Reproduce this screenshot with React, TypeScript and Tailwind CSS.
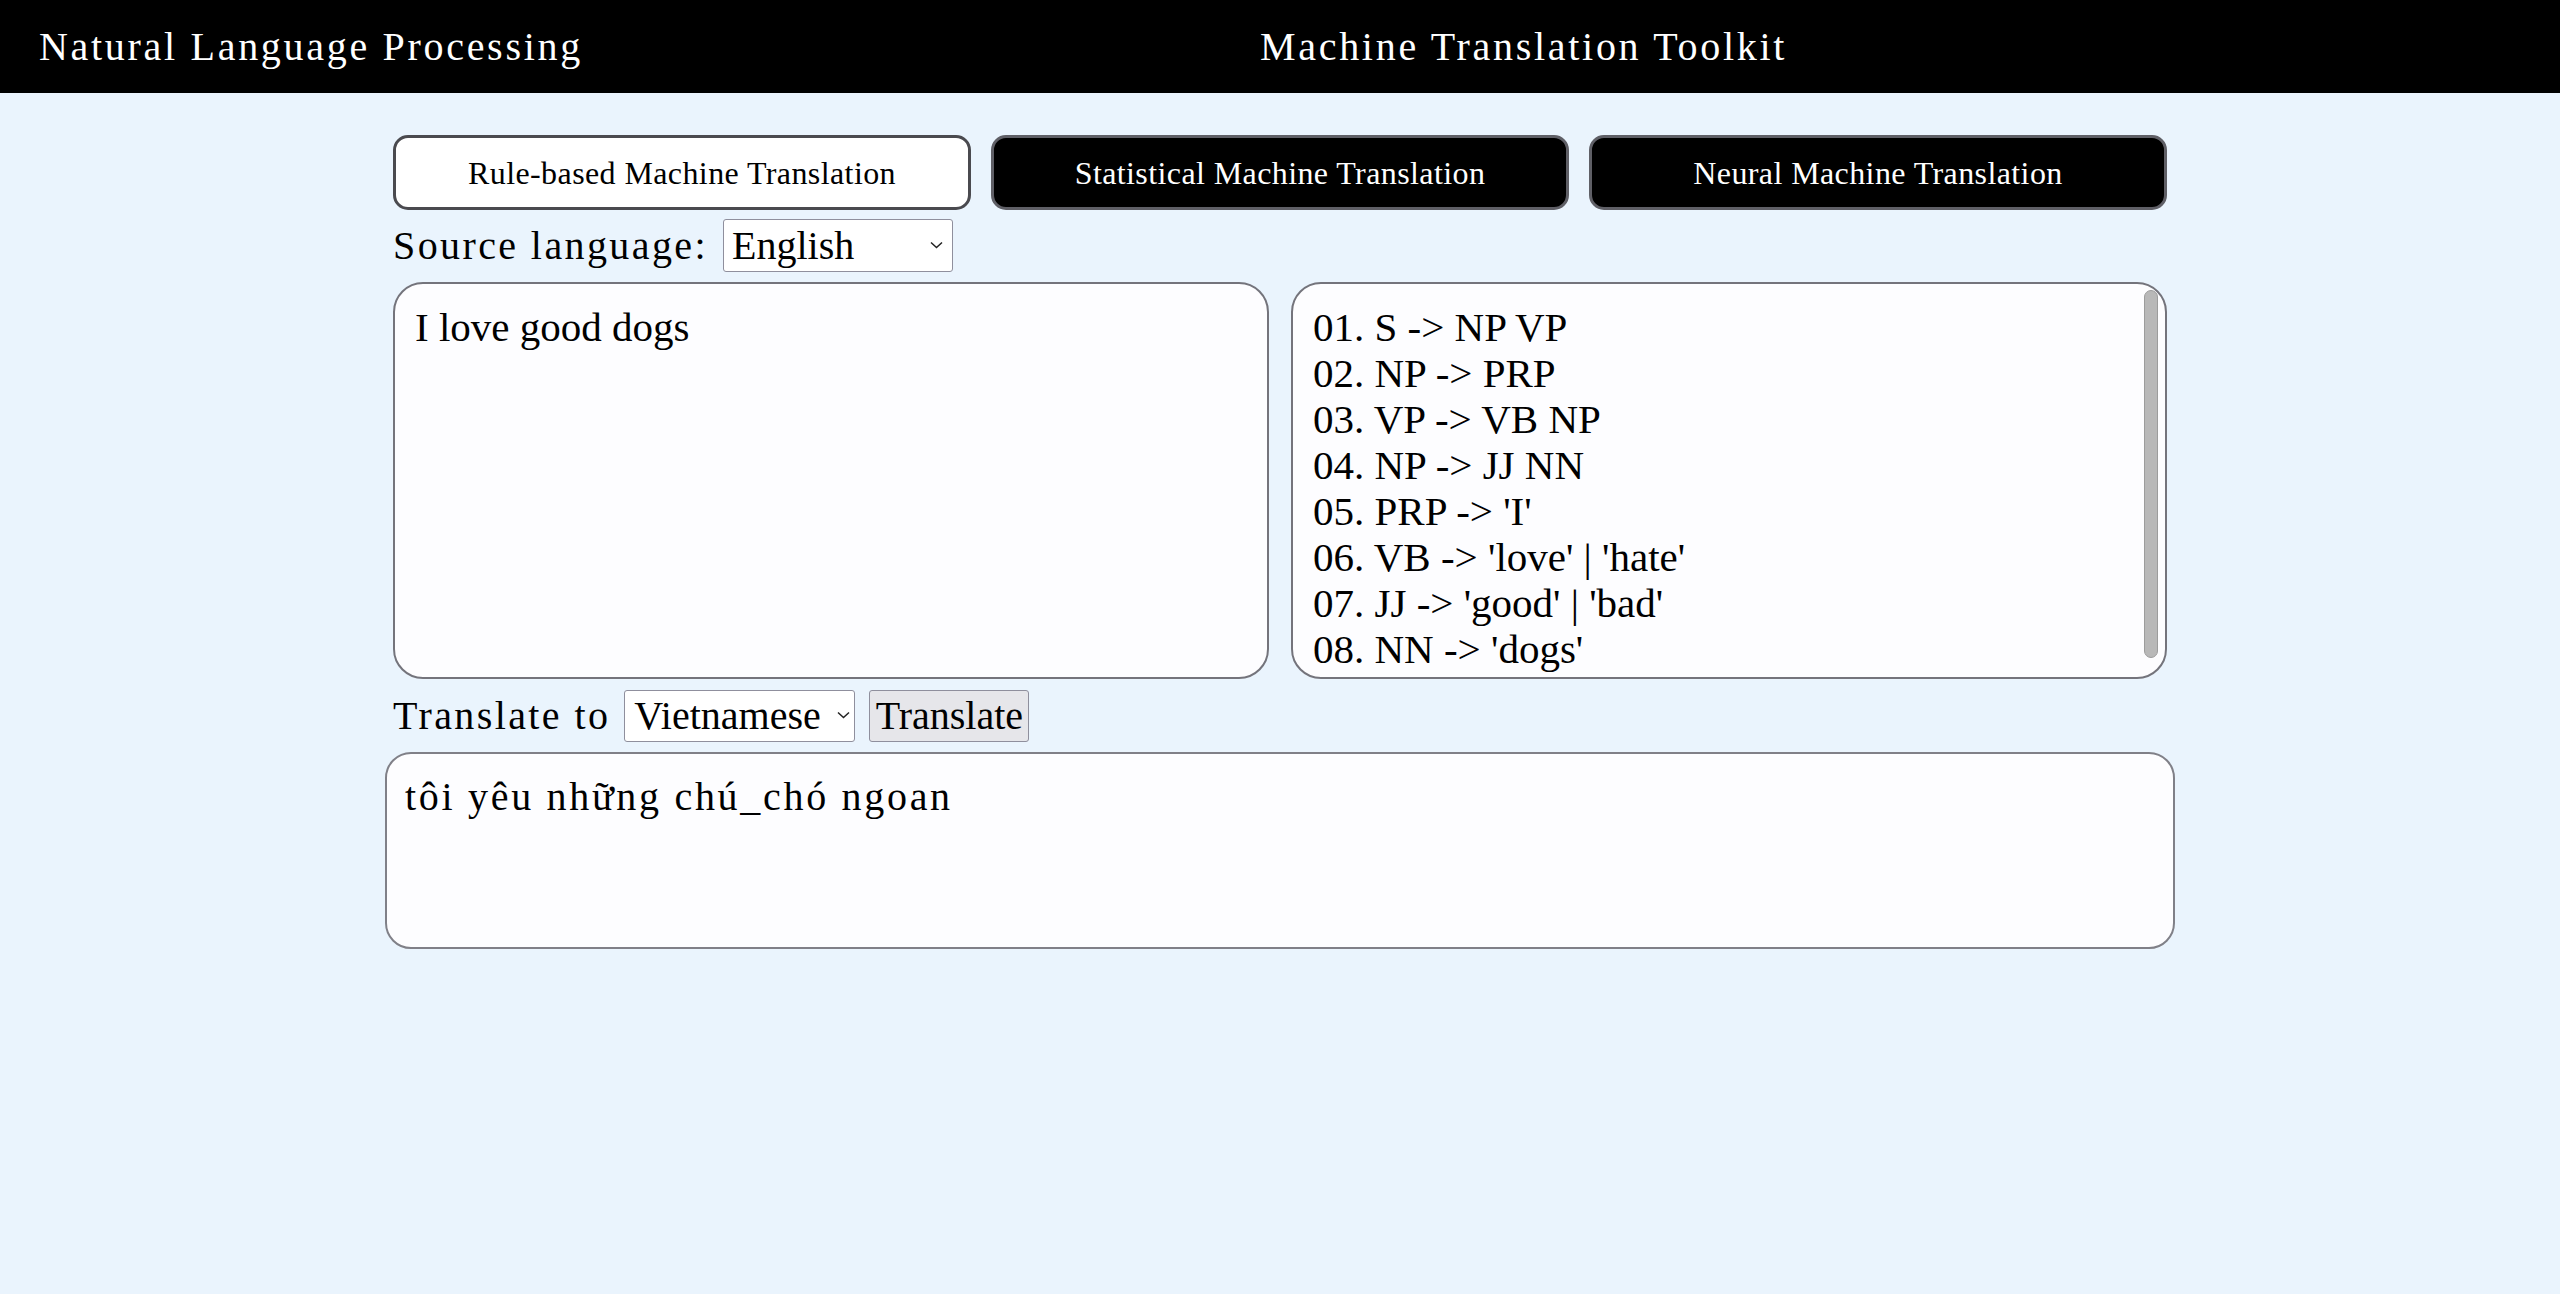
import React from 'react'

const rules = [
  "01. S -> NP VP",
  "02. NP -> PRP",
  "03. VP -> VB NP",
  "04. NP -> JJ NN",
  "05. PRP -> 'I'",
  "06. VB -> 'love' | 'hate'",
  "07. JJ -> 'good' | 'bad'",
  "08. NN -> 'dogs'",
]

const Chevron = ({ className }: { className: string }) => (
  <svg className={className} width="13" height="8" viewBox="0 0 13 8" fill="none">
    <path d="M1 1.5 L6.5 6.5 L12 1.5" stroke="#222" strokeWidth="1.5" />
  </svg>
)

export default function App() {
  return (
    <div className="min-h-[1294px] bg-[#eaf4fd] font-['Liberation_Serif',serif] text-black">
      <header className="flex h-[93px] items-center bg-black pl-[39px] text-[40px] tracking-[2.7px] text-white">
        <div className="w-[1221px]">Natural Language Processing</div>
        <div>Machine Translation Toolkit</div>
      </header>

      <main className="mx-auto w-[1774px] pt-[42px]">
        <div className="flex gap-[20px]">
          <button
            type="button"
            className="h-[75px] w-[578px] rounded-[15px] border-[3px] border-[#4a4a4f] bg-white text-[32px] tracking-[0.4px] text-black"
          >
            Rule-based Machine Translation
          </button>
          <button
            type="button"
            className="h-[75px] w-[578px] rounded-[15px] border-[3px] border-[#5f5f66] bg-black text-[32px] tracking-[0.4px] text-white"
          >
            Statistical Machine Translation
          </button>
          <button
            type="button"
            className="h-[75px] w-[578px] rounded-[15px] border-[3px] border-[#5f5f66] bg-black text-[32px] tracking-[0.4px] text-white"
          >
            Neural Machine Translation
          </button>
        </div>

        <div className="mt-[9px] flex h-[53px] items-center">
          <span className="text-[40px] leading-[53px] tracking-[2.4px]">Source language:</span>
          <div className="relative ml-[15px]">
            <select className="h-[53px] w-[230px] appearance-none rounded-[3px] border border-[#8f8f9d] bg-white pl-[8px] text-[40px] leading-[51px] outline-none">
              <option>English</option>
              <option>Vietnamese</option>
            </select>
            <Chevron className="pointer-events-none absolute right-[10px] top-[22px]" />
          </div>
        </div>

        <div className="mt-[10px] flex gap-[22px]">
          <textarea
            readOnly
            defaultValue="I love good dogs"
            className="h-[397px] w-[876px] resize-none rounded-[30px] border-2 border-[#74747c] bg-[#fdfdff] px-[20px] pt-[20px] text-[41px] leading-[46px] outline-none"
          />
          <div className="relative h-[397px] w-[876px] overflow-hidden rounded-[30px] border-2 border-[#74747c] bg-[#fdfdff] px-[20px] pt-[20px] text-[41px] leading-[46px]">
            {rules.map((rule) => (
              <div key={rule} className="whitespace-pre">
                {rule}
              </div>
            ))}
            <div className="absolute right-[7px] top-[6px] h-[368px] w-[14px] rounded-full border border-[#9c9c9c] bg-[#b8b8b8]" />
          </div>
        </div>

        <div className="mt-[11px] flex h-[52px] items-center">
          <span className="text-[40px] leading-[52px] tracking-[2.4px]">Translate to</span>
          <div className="relative ml-[14px]">
            <select className="h-[52px] w-[231px] appearance-none rounded-[3px] border border-[#8f8f9d] bg-white pl-[9px] text-[40px] leading-[50px] outline-none">
              <option>Vietnamese</option>
              <option>English</option>
            </select>
            <Chevron className="pointer-events-none absolute right-[5px] top-[21px]" />
          </div>
          <button
            type="button"
            className="ml-[14px] h-[52px] w-[160px] rounded-[3px] border border-[#8f8f9d] bg-[#e6e6ea] text-[40px] leading-[50px]"
          >
            Translate
          </button>
        </div>

        <textarea
          readOnly
          defaultValue="tôi yêu những chú_chó ngoan"
          className="-mx-[8px] mt-[10px] block h-[197px] w-[1790px] resize-none rounded-[26px] border-2 border-[#808088] bg-[#fdfdff] pl-[18px] pt-[20px] text-[40px] leading-[46px] tracking-[2.7px] outline-none"
        />
      </main>
    </div>
  )
}
